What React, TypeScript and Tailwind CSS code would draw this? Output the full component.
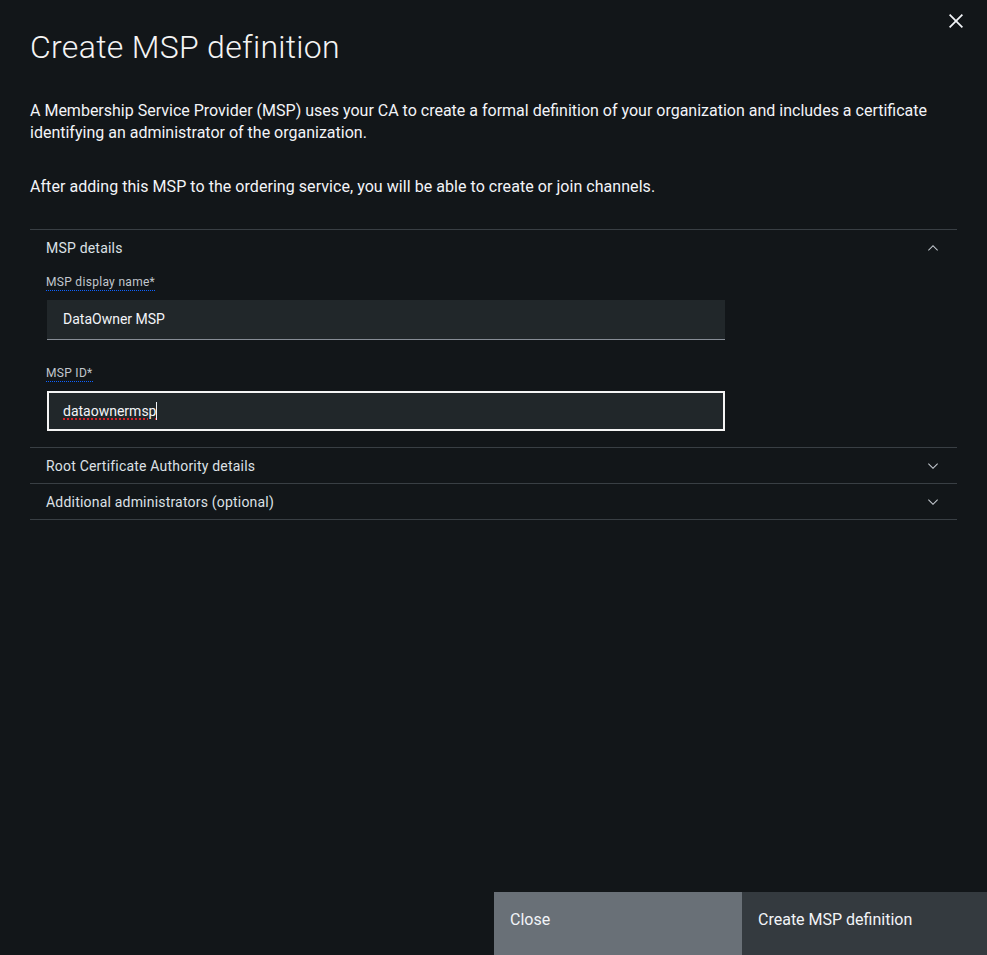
const font = { fontFamily: 'Roboto, "Liberation Sans", sans-serif' };

const ChevronIcon = ({ up }: { up?: boolean }) => (
  <svg
    width="16"
    height="16"
    viewBox="0 0 16 16"
    fill="#c1c7cd"
    className={up ? 'rotate-180' : ''}
  >
    <path d="M8 11L3 6 3.7 5.3 8 9.6 12.3 5.3 13 6z" />
  </svg>
);

const CloseIcon = () => (
  <svg width="28" height="28" viewBox="0 0 32 32" fill="#f2f4f8">
    <path d="M24 9.4L22.6 8 16 14.6 9.4 8 8 9.4 14.6 16 8 22.6 9.4 24 16 17.4 22.6 24 24 22.6 17.4 16 24 9.4z" />
  </svg>
);

const AccordionHeader = ({ title, open }: { title: string; open?: boolean }) => (
  <div className="flex h-[35px] items-center justify-between pl-4 pr-4 pt-px text-[14px] tracking-[0.2px] text-[#dde1e6]">
    <span>{title}</span>
    <ChevronIcon up={open} />
  </div>
);

const Field = ({
  label,
  value,
  focused,
}: {
  label: string;
  value: string;
  focused?: boolean;
}) => (
  <div className="flex flex-col items-start">
    <span className="border-b border-dotted border-[#0f62fe] text-[12px] leading-[16px] tracking-[0.3px] text-[#c1c7cd]">
      {label}
    </span>
    <div
      className={
        focused
          ? 'mt-[9px] ml-px flex h-10 w-[678px] items-center border-2 border-[#f4f4f4] bg-[#21272a] px-[14px] text-[14px] text-[#f2f4f8]'
          : 'mt-[9px] ml-px flex h-10 w-[678px] items-center border-b border-[#878d96] bg-[#21272a] px-4 text-[14px] text-[#f2f4f8]'
      }
    >
      {focused ? (
        <>
          <span className="underline decoration-[#da1e28] decoration-dotted decoration-2 underline-offset-[3px]">
            {value}
          </span>
          <span className="h-[18px] w-px bg-[#f2f4f8]" />
        </>
      ) : (
        <span>{value}</span>
      )}
    </div>
  </div>
);

export default function App() {
  return (
    <div
      className="relative flex h-[955px] flex-col bg-[#121619] text-[#f2f4f8]"
      style={font}
    >
      <button className="absolute right-[17px] top-[7px]">
        <CloseIcon />
      </button>

      <div className="px-[30px] pt-[27px]">
        <h1 className="text-[32px] leading-[40px] font-light tracking-[0.3px] text-[#f4f4f4]">
          Create MSP definition
        </h1>
        <p className="mt-[33px] text-[16px] leading-[22px]">
          A Membership Service Provider (MSP) uses your CA to create a formal definition of
          your organization and includes a certificate identifying an administrator of the
          organization.
        </p>
        <p className="mt-[32px] text-[16px] leading-[22px] tracking-[0.05px]">
          After adding this MSP to the ordering service, you will be able to create or join
          channels.
        </p>

        <div className="mt-[31px] flex flex-col">
          <div className="border-t border-[#393f44]">
            <AccordionHeader title="MSP details" open />
            <div className="flex flex-col gap-[25px] pb-[16px] pl-4 pt-[9px]">
              <Field label="MSP display name*" value="DataOwner MSP" />
              <Field label="MSP ID*" value="dataownermsp" focused />
            </div>
          </div>
          <div className="border-t border-[#393f44]">
            <AccordionHeader title="Root Certificate Authority details" />
          </div>
          <div className="border-y border-[#393f44]">
            <AccordionHeader title="Additional administrators (optional)" />
          </div>
        </div>
      </div>

      <div className="mt-auto flex justify-end">
        <button className="h-[63px] w-[248px] bg-[#697077] px-4 pb-8 pt-4 text-left text-[16px] text-[#f2f4f8]">
          Close
        </button>
        <button className="h-[63px] w-[245px] bg-[#343a3f] px-4 pb-8 pt-4 text-left text-[16px] text-[#f2f4f8]">
          Create MSP definition
        </button>
      </div>
    </div>
  );
}
